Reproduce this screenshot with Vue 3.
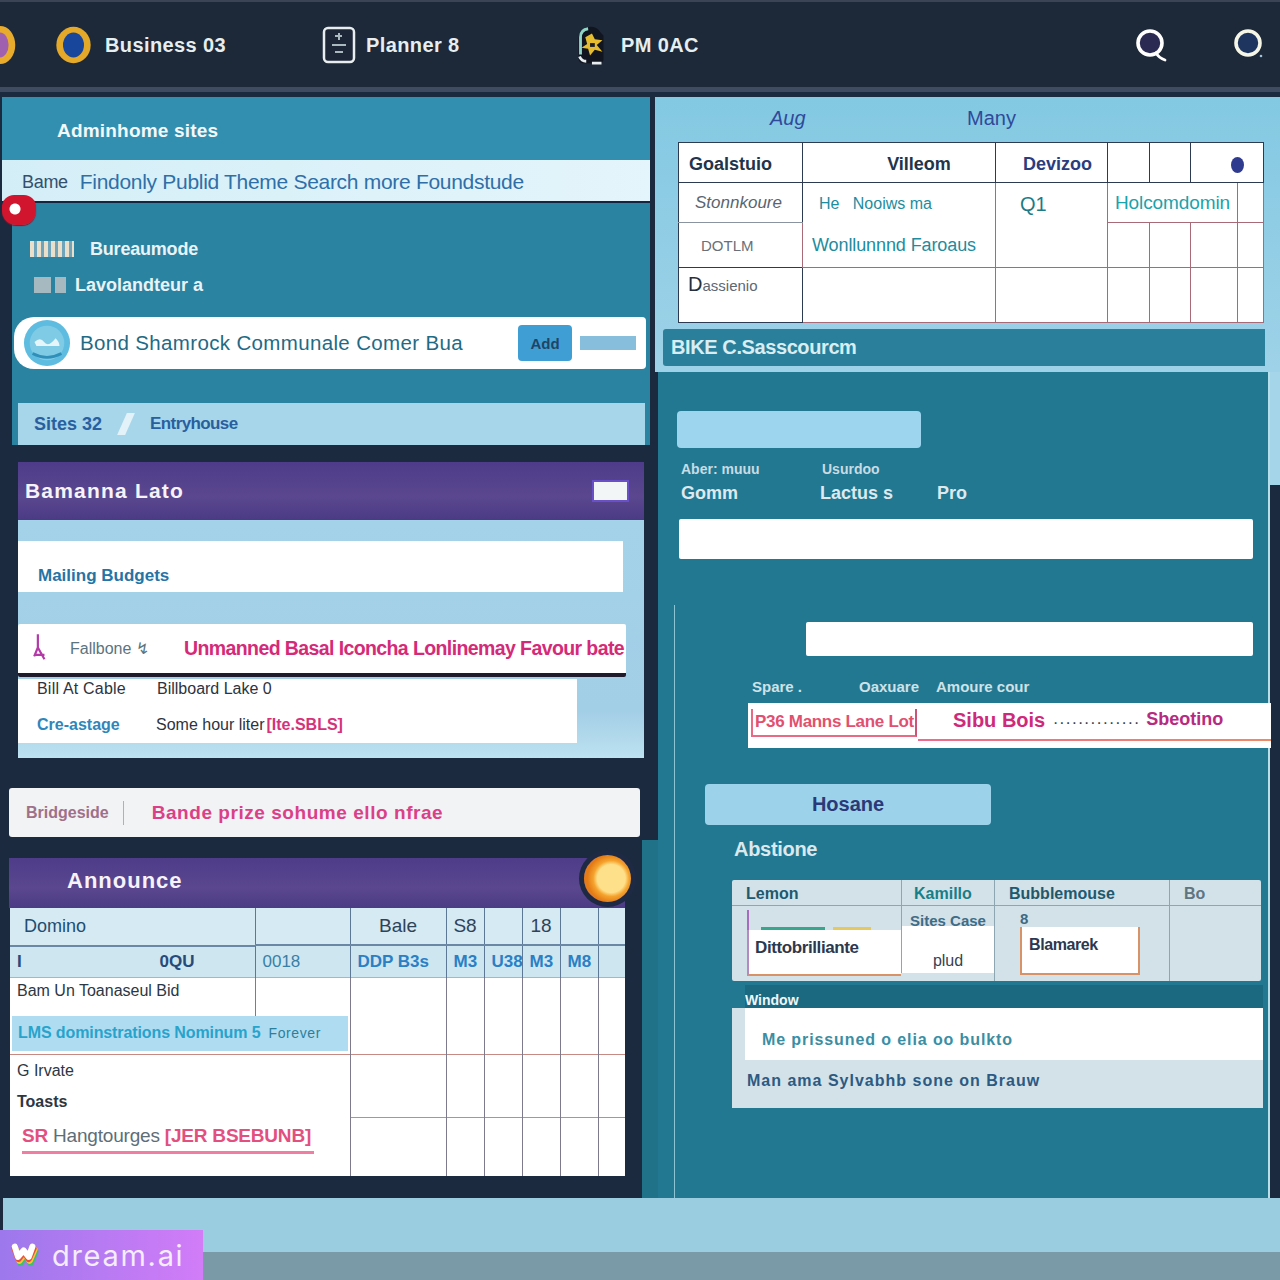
<template>
  <div class="page">
    <header class="topbar">
      <svg class="coin cut" viewBox="0 0 36 44"><ellipse cx="18" cy="22" rx="16" ry="20" fill="#e9ab2c"/><ellipse cx="18" cy="22" rx="9" ry="13" fill="#a060b0"/></svg>
      <div class="nav first">
        <svg class="coin" viewBox="0 0 38 44"><ellipse cx="19" cy="22" rx="18" ry="19" fill="#e5a92a"/><ellipse cx="19" cy="22" rx="11" ry="13" fill="#17469a"/></svg>
        <span>Business 03</span>
      </div>
      <div class="nav second">
        <svg class="tablet" viewBox="0 0 34 38"><rect x="2" y="2" width="30" height="34" rx="4" fill="#1d2636" stroke="#e8eef0" stroke-width="2.5"/><path d="M13 10h7M17 7v7M10 19h14M13 26h8" stroke="#aab8c0" stroke-width="2" fill="none"/></svg>
        <span>Planner 8</span>
      </div>
      <div class="nav third">
        <svg class="badge" viewBox="0 0 34 44">
          <path d="M6 10q2-7 10-7t11 6l3 3v26q-1 3-4 3H8q-3 0-4-4V14z" fill="#10151f"/>
          <path d="M6 32V14q0-8 8-9" stroke="#8fd4c4" stroke-width="3" fill="none"/>
          <path d="M5 34q2 5 7 5M18 41h10" stroke="#e8eef0" stroke-width="3" fill="none"/>
          <path d="M18 10l3 6 8 1-6 5 6 7-8-2-5 6-2-7-7-1 6-4-2-7z" fill="#e5bd2e"/>
          <path d="M16 20h5v4h-5z" fill="#1a1f2a"/>
        </svg>
        <span>PM 0AC</span>
      </div>
      <div class="tools">
        <svg class="search" viewBox="0 0 32 36"><circle cx="15" cy="16" r="12" fill="#2a2a52" stroke="#fff" stroke-width="3.6"/><path d="M21 26q3 5 9 7" stroke="#fff" stroke-width="2.8" fill="none" stroke-linecap="round"/></svg>
        <svg class="search" viewBox="0 0 32 36"><circle cx="15" cy="16" r="12" fill="#1e3560" stroke="#f6f6e6" stroke-width="3.6"/><circle cx="28" cy="29" r="1.3" fill="#9fc0d8"/></svg>
      </div>
    </header>
    <div class="rule"></div>

    <main class="columns">
      <section class="left">
        <div class="teal-head">
          <h2>Adminhome sites</h2>
          <div class="notice">
            <span class="ink">Bame</span><span>Findonly Publid Theme Search more Foundstude</span>
          </div>
        </div>
        <div class="teal-body">
          <span class="pin"></span>
          <p class="line-a"><i></i>Bureaumode</p>
          <p class="line-b"><i></i><i></i>Lavolandteur a</p>
          <div class="pill">
            <svg class="globe" viewBox="0 0 50 50"><circle cx="25" cy="25" r="24" fill="#5ebce0"/><circle cx="25" cy="25" r="18" fill="#7fcbe6"/><path d="M12 24q6-6 10 0t12-4q4 4 4 8H14z" fill="#e6f5fa"/><path d="M10 36q15 8 30 0" stroke="#2f8fb8" stroke-width="3" fill="none"/></svg>
            <span class="pill-text">Bond Shamrock Communale Comer Bua</span>
            <button class="pill-btn">Add</button>
            <span class="pill-bar"></span>
          </div>
          <div class="crumbs"><span>Sites 32</span><b></b><span class="second-crumb">Entryhouse</span></div>
        </div>

        <div class="card-form">
          <div class="violet-head form-head">
            <span>Bamanna Lato</span>
            <span class="mini"></span>
          </div>
          <div class="form-body">
            <div class="field">Mailing Budgets</div>
            <div class="alert">
              <svg viewBox="0 0 30 44"><path d="M8 2v18M8 20l-5 12M8 20l9 16M3 30h14" stroke="#b43aa8" stroke-width="3" fill="none"/></svg>
              <span class="muted">Fallbone &#8623;</span>
              <span class="pink">Unmanned Basal Iconcha Lonlinemay Favour bate</span>
            </div>
            <div class="details">
              <p><b>Bill At Cable</b><span>Billboard Lake 0</span></p>
              <p class="tall"><em>Cre-astage</em><span>Some hour liter</span><u>[Ite.SBLS]</u></p>
            </div>
          </div>
        </div>

        <div class="flash"><span>Bridgeside</span><i></i><em>Bande prize sohume ello nfrae</em></div>

        <div class="violet-head table-head">
          <span>Announce</span>
          <span class="sun"></span>
        </div>
        <table class="grid-left">
          <colgroup><col class="c1" /><col class="c2" /><col class="c3" /><col class="c4" /><col class="c4" /><col class="c4" /><col class="c4" /><col /></colgroup>
          <tr class="h1">
            <th>Domino</th><th></th><th class="mid">Bale</th><th class="mid">S8</th><th></th><th class="mid">18</th><th></th><th></th>
          </tr>
          <tr class="h2">
            <th class="split"><b>I</b><b>0QU</b></th><th>0018</th><th class="blue">DDP B3s</th><th class="blue">M3</th><th class="blue">U38</th><th class="blue">M3</th><th class="blue">M8</th><th></th>
          </tr>
          <tr class="r1">
            <td>Bam Un Toanaseul Bid</td><td></td><td rowspan="2"></td><td rowspan="2"></td><td rowspan="2"></td><td rowspan="2"></td><td rowspan="2"></td><td rowspan="2"></td>
          </tr>
          <tr class="r2">
            <td colspan="2" class="flat"><div class="glow"><span>LMS dominstrations Nominum 5</span><small>Forever</small></div></td>
          </tr>
          <tr class="r3">
            <td colspan="2"><p>G Irvate</p><p>Toasts</p></td><td></td><td></td><td></td><td></td><td></td><td></td>
          </tr>
          <tr class="r4">
            <td colspan="2" class="flat"><div class="rose"><span>SR</span> <span class="grey">Hangtourges</span> <span>[JER BSEBUNB]</span></div></td><td></td><td></td><td></td><td></td><td></td><td></td>
          </tr>
        </table>
      </section>

      <section class="right">
        <div class="sky">
          <div class="sky-labels"><span>Aug</span><span>Many</span></div>
          <table class="grid-top">
            <colgroup><col class="t1" /><col class="t2" /><col class="t3" /><col class="t4" /><col class="t4" /><col class="t6" /><col /></colgroup>
            <tr class="th">
              <th>Goalstuio</th><th class="mid offset">Villeom</th><th class="mid navy">Devizoo</th><th></th><th></th><th colspan="2" class="dot-cell"><i></i></th>
            </tr>
            <tr class="a">
              <td class="lined">Stonnkoure</td>
              <td rowspan="2" class="stack"><p>He &nbsp; Nooiws ma</p><p>Wonllunnnd Faroaus</p></td>
              <td rowspan="2" class="q">Q1</td>
              <td colspan="3" class="teal-text">Holcomdomin</td>
              <td></td>
            </tr>
            <tr class="b">
              <td class="center-grey">DOTLM</td><td></td><td></td><td></td><td></td>
            </tr>
            <tr class="c">
              <td class="top-grey">Dassienio</td><td></td><td></td><td></td><td></td><td></td><td></td>
            </tr>
          </table>
          <div class="sky-bar"><span>BIKE C.Sasscourcm</span></div>
        </div>

        <div class="deep">
          <div class="block"></div>
          <div class="labels small"><span>Aber: muuu</span><span>Usurdoo</span></div>
          <div class="labels"><span>Gomm</span><span>Lactus s</span><span>Pro</span></div>
          <div class="white w1"></div>
          <div class="inner">
            <div class="white w2"></div>
            <div class="labels3"><span>Spare .</span><span>Oaxuare</span><span>Amoure cour</span></div>
            <div class="redrow">
              <span class="boxed">P36 Manns Lane Lot</span>
              <span class="swash">Sibu Bois</span>
              <span class="dots">..............</span>
              <span class="swash end">Sbeotino</span>
            </div>
            <button class="hosane">Hosane</button>
            <div class="sub">Abstione</div>
            <div class="panel">
              <div class="cell hd">Lemon</div><div class="cell hd teal">Kamillo</div><div class="cell hd">Bubblemouse</div><div class="cell hd grey">Bo</div>
              <div class="cell c-a"><div class="stripes"></div><div class="box orange">Dittobrilliante</div></div>
              <div class="cell c-b"><p>Sites Case</p><p class="end">plud</p></div>
              <div class="cell c-c"><small>8</small><div class="box orange narrow">Blamarek</div></div>
              <div class="cell"></div>
            </div>
            <div class="lower">
              <div class="lower-head">Window</div>
              <div class="lower-white">Me prissuned o elia oo bulkto</div>
              <div class="lower-grey">Man ama Sylvabhb sone on Brauw</div>
            </div>
          </div>
        </div>
      </section>
    </main>

    <footer class="foot">
      <div class="foot-a"></div>
      <div class="foot-b"></div>
    </footer>

    <div class="mark">
      <svg viewBox="0 0 30 28">
        <path d="M6 10l4 12 6-8 5 8 5-12" fill="none" stroke="#3ac070" stroke-width="7" stroke-linejoin="round" stroke-linecap="round"/>
        <path d="M5 8l4 12 6-8 5 8 5-12" fill="none" stroke="#f5c83a" stroke-width="7" stroke-linejoin="round" stroke-linecap="round"/>
        <path d="M4 7l4 11 6-8 5 8 5-11" fill="none" stroke="#e8503a" stroke-width="7" stroke-linejoin="round" stroke-linecap="round"/>
        <path d="M4 5l3.500 11 6-7 5.500 7 4-11" fill="none" stroke="#fff" stroke-width="6.500" stroke-linejoin="round" stroke-linecap="round"/>
      </svg>
      <span>dream.ai</span>
    </div>
  </div>
</template>

<script setup>
</script>

<style>
html, body { margin: 0; background: #1c2a3f; }
</style>

<style scoped>
.page { position: relative; width: 1280px; height: 1280px; overflow: hidden; background: #1c2a3f; font-family: "Liberation Sans", Arial, sans-serif; display: flex; flex-direction: column; }
p { margin: 0; }
h2 { margin: 0; }

.topbar { height: 88px; flex: none; box-sizing: border-box; border-top: 2px solid #3a4454; display: flex; align-items: center; background: #1d2838; color: #e6eef0; font-size: 20px; font-weight: 700; }
.coin { width: 37px; height: 42px; flex: none; }
.cut { margin-left: -18px; width: 36px; }
.nav { display: flex; align-items: center; }
.nav span { letter-spacing: .4px; }
.first { margin-left: 37px; width: 267px; gap: 13px; }
.second { width: 252px; gap: 10px; }
.third { gap: 13px; }
.tablet { width: 34px; height: 38px; }
.badge { width: 34px; height: 42px; }
.tools { margin-left: auto; display: flex; gap: 66px; margin-right: 15px; }
.search { width: 32px; height: 36px; }
.rule { height: 5px; flex: none; margin-top: -1px; background: #3f4b60; }

.columns { height: 1101px; flex: none; display: flex; margin-top: 5px; }
.left { width: 655px; flex: none; }
.right { flex: 1; min-width: 0; }

.teal-head { margin-left: 2px; width: 648px; background: #338fb0; }
.teal-head h2 { height: 63px; box-sizing: border-box; padding: 24px 0 0 55px; font-size: 19px; line-height: 20px; color: #f3f8fa; letter-spacing: .2px; font-weight: 700; }
.notice { height: 43px; box-sizing: border-box; display: flex; align-items: center; gap: 12px; padding: 3px 0 0 20px; background: linear-gradient(90deg, #d4eef7, #e4f5fb); color: #2f6fa8; font-size: 21px; letter-spacing: -.3px; border-bottom: 2px solid #14263f; }
.notice .ink { color: #33506e; font-size: 18px; }
.teal-body { position: relative; margin-left: 12px; width: 638px; height: 242px; background: #2b83a2; box-sizing: border-box; padding-top: 34px; }
.pin { position: absolute; left: -10px; top: -8px; width: 34px; height: 30px; border-radius: 12px 12px 14px 14px; background: radial-gradient(circle at 13px 14px, #fff 5px, #d2152e 6px); box-shadow: 0 1px 1px #7b1a2a; }
.line-a, .line-b { display: flex; align-items: center; height: 24px; color: #e9f3f6; font-size: 18px; font-weight: 700; letter-spacing: -.2px; padding-left: 18px; }
.line-a i { width: 44px; height: 16px; background: repeating-linear-gradient(90deg, #eadfcb 0 4px, #6fa4ba 4px 7px); margin-right: 16px; }
.line-b { margin-top: 12px; padding-left: 22px; font-size: 18px; letter-spacing: 0; }
.line-b i { width: 17px; height: 16px; margin-right: 4px; background: #a6b9c0; }
.line-b i:last-of-type { width: 11px; margin-right: 9px; }
.pill { margin: 20px 4px 0 2px; height: 52px; display: flex; align-items: center; background: #fff; border-radius: 20px 4px 4px 20px; padding-left: 9px; }
.globe { width: 48px; height: 48px; flex: none; }
.pill-text { margin-left: 9px; width: 438px; white-space: nowrap; color: #1f6a85; font-size: 20.5px; letter-spacing: .35px; }
.pill-btn { width: 54px; height: 36px; border: 0; padding: 0; border-radius: 4px; background: #3f9fd4; color: #1f4465; font: 700 15px "Liberation Sans", Arial, sans-serif; }
.pill-bar { margin-left: 8px; width: 56px; height: 14px; background: #86bedc; }
.crumbs { margin: 34px 5px 0 6px; height: 42px; display: flex; align-items: center; background: #a7d6eb; color: #2a5f9e; padding-left: 16px; font-size: 18px; font-weight: 700; }
.crumbs b { width: 8px; height: 22px; background: #e3f2f8; transform: skewX(-24deg); margin: 0 20px 0 20px; }
.second-crumb { letter-spacing: -.6px; font-size: 17px; }

.violet-head { display: flex; align-items: center; justify-content: space-between; box-sizing: border-box; background: linear-gradient(180deg, #4e3c8a, #5a478f 60%, #4b3a85); color: #f6f3fb; font-weight: 700; }
.card-form { margin: 17px 6px 0 18px; }
.form-head { height: 58px; width: 626px; padding: 0 15px 0 7px; font-size: 21px; letter-spacing: 1.2px; }
.mini { width: 37px; height: 22px; background: #f3f6f6; border: 2px solid #6a50c8; box-sizing: border-box; }
.form-body { height: 238px; width: 626px; box-sizing: border-box; padding-top: 21px; background: linear-gradient(180deg, #a4d3e9, #a2cee6 80%, #bde2f0); }
.field { width: 605px; height: 51px; box-sizing: border-box; padding: 25px 0 0 20px; background: #fff; color: #2674a6; font-size: 17px; line-height: 20px; font-weight: 700; }
.alert { margin-top: 32px; width: 608px; height: 53px; box-sizing: border-box; display: flex; align-items: center; background: #fff; border-radius: 2px; border-bottom: 4px solid #1f1a2c; padding-left: 14px; white-space: nowrap; overflow: hidden; }
.alert svg { width: 22px; height: 40px; flex: none; }
.muted { margin-left: 16px; color: #5a7480; font-size: 16px; width: 114px; flex: none; }
.pink { color: #d52a78; font-size: 19.5px; font-weight: 700; letter-spacing: -.6px; }
.details { margin-top: 2px; width: 559px; height: 64px; background: #fff; box-sizing: border-box; padding: 0 0 0 19px; }
.details p { display: flex; align-items: center; white-space: nowrap; height: 19px; font-size: 16px; color: #2e3340; }
.details p b { font-weight: 400; width: 120px; letter-spacing: .2px; }
.details .tall { margin-top: 16px; height: 22px; }
.details em { font-style: normal; font-weight: 700; color: #2e86bb; width: 119px; font-size: 16px; }
.details u { color: #d5327b; text-decoration: none; font-weight: 700; margin-left: 2px; }
.flash { margin: 30px 15px 0 9px; height: 49px; display: flex; align-items: center; background: #f1f3f5; border-radius: 3px; padding-left: 17px; font-size: 19px; font-weight: 700; white-space: nowrap; }
.flash span { color: #a07088; font-size: 16px; }
.flash i { width: 1px; height: 24px; background: #a8b2c4; margin: 0 28px 0 14px; }
.flash em { font-style: normal; color: #dc3f88; letter-spacing: .55px; }
.table-head { position: relative; margin: 21px 0 0 9px; width: 616px; height: 50px; padding: 0 0 5px 58px; font-size: 22px; letter-spacing: 1px; }
.sun { position: absolute; right: -6px; top: -3px; width: 47px; height: 47px; border-radius: 50%; background: radial-gradient(circle at 58% 50%, #ffe08a 0 14px, #f5a32d 18px, #e47b16 24px); box-shadow: 0 0 0 5px #1e2a44; }

.grid-left { margin-left: 10px; width: 615px; height: 267px; table-layout: fixed; border-collapse: collapse; background: #fff; font-size: 16px; color: #2c3744; }
.c1 { width: 245px; }
.c2 { width: 95px; }
.c3 { width: 96px; }
.c4 { width: 38px; }
.grid-left th, .grid-left td { padding: 0; border-left: 1px solid #7c7a8c; border-top: 1px solid #c68a84; vertical-align: middle; font-weight: 400; text-align: left; white-space: nowrap; overflow: hidden; }
.grid-left tr > :first-child { border-left: 0; }
.h1 { height: 37px; background: #d6eaf3; }
.h1 th { border-top: 0; border-left-color: #5d7896; }
.h1 th:first-child { padding-left: 14px; color: #214d70; font-size: 18px; }
.mid { text-align: center !important; }
.h1 .mid { color: #2f4358; font-size: 19px; }
.h2 { height: 32px; background: #cde6f0; }
.h2 th { border-top: 2px solid #6a87a6; border-left-color: #5d7896; color: #3a7fa6; padding-left: 7px !important; font-size: 17px; }
.split { display: flex; justify-content: space-between; height: 32px; align-items: center; padding: 0 60px 0 7px !important; box-sizing: border-box; color: #284a78 !important; }
.blue { color: #2b7fc5 !important; font-weight: 700 !important; padding-left: 2px !important; }
.r1 { height: 38px; }
.r1 td { vertical-align: top; padding: 4px 0 0 7px; border-top-color: #e8a088; }
.r1 td:nth-child(n+3), .r2 td:nth-child(n+3) { padding: 0; }
.r2 { height: 39px; }
.flat { padding: 0 !important; border-top: 0 !important; vertical-align: top !important; }
.glow { height: 35px; margin: 0 2px; display: flex; align-items: center; background: #afdcf1; color: #28a3cc; font-size: 16px; font-weight: 700; letter-spacing: -.1px; padding-left: 6px; }
.glow small { margin-left: 8px; font-size: 14px; color: #2c7f9c; font-weight: 400; letter-spacing: .6px; }
.r3 { height: 63px; }
.r3 p { line-height: 23px; padding-left: 7px; font-size: 16px; }
.r3 p + p { margin-top: 8px; font-weight: 700; }
.r4 { height: 58px; }
.rose { margin: 7px 36px 0 12px; padding-bottom: 4px; border-bottom: 3px solid #ef7ea0; font-size: 19px; font-weight: 700; color: #e3507f; letter-spacing: -.2px; }
.rose .grey { color: #5d6e78; font-weight: 400; }

.sky { margin-left: 0; height: 275px; background: linear-gradient(180deg, #83c9e2, #9ed2e8); box-sizing: border-box; padding-top: 10px; }
.sky-labels { height: 35px; display: flex; color: #2f4a9a; font-size: 20px; font-style: italic; }
.sky-labels span:first-child { margin-left: 115px; width: 197px; }
.sky-labels span:last-child { font-style: normal; }
.grid-top { margin-left: 23px; width: 586px; height: 180px; table-layout: fixed; border-collapse: collapse; background: #fff; font-size: 18px; color: #22344a; }
.t1 { width: 124px; }
.t2 { width: 193px; }
.t3 { width: 112px; }
.t4 { width: 41.5px; }
.t6 { width: 47px; }
.grid-top th, .grid-top td { padding: 0; border: 1px solid #2c3a52; border-top-width: 1.5px; text-align: left; font-weight: 400; white-space: nowrap; overflow: hidden; }
.grid-top td { border-color: #a96a78; }
.grid-top td:first-child { border-color: #2c3a52; }
.th { height: 40px; }
.th th { padding-top: 3px; }
.th th:first-child { padding-left: 10px; font-weight: 700; }
.th .mid { font-weight: 700; }
.offset { padding-left: 40px !important; }
.navy { color: #2a3d7e; padding-left: 12px !important; }
.dot-cell { text-align: right !important; padding-right: 19px !important; }
.dot-cell i { display: inline-block; width: 13px; height: 16px; border-radius: 50%; background: #2f3b8f; vertical-align: middle; }
.a { height: 40px; }
.b { height: 45px; }
.c { height: 55px; }
.lined { padding-left: 16px !important; color: #5a6570; font-style: italic; font-size: 17px; border-bottom-color: #8a94a0 !important; }
.stack { padding: 0 !important; vertical-align: top; color: #1e8c9e; font-weight: 700; }
.stack p:first-child { margin: 12px 0 0 16px; font-size: 16px; }
.stack p:last-child { margin: 22px 0 0 9px; font-size: 18px; letter-spacing: -.1px; }
.q { vertical-align: top; padding: 10px 0 0 24px !important; color: #1c7b86; font-size: 20px; font-weight: 700; }
.teal-text { color: #19a3ac; font-size: 19px; font-weight: 700; text-align: center !important; letter-spacing: -.1px; }
.center-grey { padding-left: 22px !important; color: #6a6f78; font-size: 15px; }
.top-grey { vertical-align: top; padding: 5px 0 0 9px !important; color: #5c6872; font-size: 15px; }
.top-grey::first-letter { font-size: 20px; color: #252f3e; }
.sky-bar { margin: 6px 15px 0 8px; height: 37px; display: flex; align-items: center; background: #2a7f9a; padding-left: 8px; border-radius: 3px 0 0 3px; }
.sky-bar span { color: #d8eef2; font-size: 20px; font-weight: 700; letter-spacing: -.4px; }

.deep { position: relative; margin: 0 10px 0 3px; height: 826px; box-sizing: border-box; padding: 39px 0 0 19px; background: #227891; border-right: 2px solid #b6dfea; }
.deep::before { content: ""; position: absolute; left: -16px; top: 468px; bottom: 0; width: 16px; background: #1f7288; }
.deep::after { content: ""; position: absolute; right: -12px; top: 0; width: 10px; height: 113px; background: #a4d5e8; }
.block { width: 244px; height: 37px; border-radius: 4px; background: #9ed5ee; }
.labels { display: flex; color: #dde9ee; font-weight: 700; font-size: 18px; height: 24px; align-items: center; }
.labels span:nth-child(1) { width: 143px; padding-left: 4px; box-sizing: border-box; }
.labels span:nth-child(2) { width: 117px; }
.labels.small { margin: 11px 0 2px; font-size: 14px; height: 20px; color: #c8dce4; }
.labels.small span:nth-child(1) { width: 145px; }
.white { background: #fff; border-radius: 2px; }
.w1 { margin: 14px 0 0 2px; width: 574px; height: 40px; }
.inner { margin: 46px 0 0 -3px; height: 593px; box-sizing: border-box; padding-top: 17px; border-left: 1px solid #8cc4d6; }
.w2 { margin: 0 0 0 131px; width: 447px; height: 34px; }
.labels3 { display: flex; margin-left: 77px; height: 26px; margin-top: 17px; align-items: center; color: #cfe2e8; font-size: 15px; font-weight: 700; white-space: nowrap; }
.labels3 span:nth-child(1) { width: 107px; }
.labels3 span:nth-child(2) { width: 77px; }
.redrow { margin: 4px 0 0 73px; width: 523px; height: 45px; box-sizing: border-box; padding-top: 6px; display: flex; align-items: flex-start; background: #fff; white-space: nowrap; color: #c92a66; font-size: 17px; font-weight: 700; position: relative; }
.redrow::after { content: ""; position: absolute; left: 170px; right: 0; top: 36px; height: 2px; background: linear-gradient(90deg, #ef6a8c, #ee8a66); }
.boxed { width: 166px; height: 28px; flex: none; box-sizing: border-box; margin-left: 3px; padding-left: 2px; border: 2px solid #e86a84; border-right-color: #cc5577; border-top: 0; letter-spacing: -.3px; line-height: 26px; color: #e25070; overflow: hidden; }
.swash { margin-left: 36px; font-size: 20px; color: #cf2a7a; }
.dots { margin-left: 8px; color: #3a4450; font-weight: 400; letter-spacing: 1.5px; }
.swash.end { margin-left: 6px; font-size: 18px; color: #b72a80; }
.hosane { display: block; margin: 36px 0 0 30px; width: 286px; height: 41px; border: 0; border-radius: 4px; background: #9dd3ea; color: #2a3a78; font: 700 20px "Liberation Sans", Arial, sans-serif; }
.sub { margin: 14px 0 0 59px; height: 20px; line-height: 20px; color: #dbe9ee; font-size: 20px; font-weight: 700; letter-spacing: -.3px; }
.panel { margin: 21px 0 0 57px; width: 529px; height: 101px; display: grid; grid-template-columns: 169px 93px 175px 92px; grid-template-rows: 26px 75px; background: #d3e2e8; border-radius: 2px; }
.cell { border-left: 1px solid #8ea6b2; position: relative; box-sizing: border-box; }
.cell:nth-child(4n+1) { border-left: 0; }
.hd { border-bottom: 1px solid #8ea6b2; padding-left: 14px; line-height: 28px; font-size: 16px; color: #20596e; font-weight: 700; white-space: nowrap; }
.hd.teal { color: #167f8a; padding-left: 12px; }
.hd.grey { color: #5f7580; }
.c-a { padding: 4px 0 0 15px; }
.stripes { height: 20px; border-left: 2px solid #a56cc0; background: linear-gradient(90deg, #d3e2e8 8%, #36a68c 8% 50%, #d3e2e8 50% 55%, #e6c860 55% 80%, #d3e2e8 80%) 0 100% / 100% 3px no-repeat; }
.box { background: #fff; box-sizing: border-box; color: #2b3850; font-weight: 700; }
.orange { border: 2px solid #d99268; border-top: 0; }
.c-a .box { height: 46px; padding: 8px 0 0 6px; font-size: 17px; letter-spacing: -.4px; white-space: nowrap; overflow: hidden; border-right: 0; border-left-color: #b48ac0; }
.c-b { background: linear-gradient(180deg, #d3e2e8 20px, #fff 20px); margin-bottom: 8px; padding-top: 6px; color: #3f6c86; font-size: 15px; font-weight: 700; white-space: nowrap; text-align: center; }
.c-b .end { margin-top: 23px; font-size: 16px; color: #3a3f50; font-weight: 400; }
.c-c { padding: 4px 0 0 25px; }
.c-c small { display: block; height: 17px; line-height: 17px; color: #406a80; font-size: 15px; font-weight: 700; }
.narrow { width: 120px; height: 48px; padding: 9px 0 0 7px; font-size: 16px; letter-spacing: -.4px; }
.lower { margin: 4px 0 0 57px; width: 531px; }
.lower-head { margin-left: 13px; height: 23px; background: #1a6980; color: #eef6f8; font-size: 14px; font-weight: 700; line-height: 30px; overflow: hidden; }
.lower-white { height: 52px; box-sizing: border-box; padding: 23px 0 0 17px; background: #fff; border-left: 13px solid #d3e2e8; color: #3a8ea3; font-size: 16px; letter-spacing: .9px; font-weight: 700; }
.lower-grey { height: 48px; box-sizing: border-box; padding: 12px 0 0 2px; background: #d3e2e8; border-left: 13px solid #d3e2e8; color: #2c5a82; font-size: 16px; font-weight: 700; letter-spacing: 1px; }

.foot { flex: none; }
.foot-a { height: 54px; margin-left: 3px; background: #9bcde0; }
.foot-b { height: 28px; background: #7b9aa8; }

.mark { position: absolute; left: 0; top: 1230px; width: 203px; height: 50px; box-sizing: border-box; padding-left: 11px; display: flex; align-items: center; gap: 13px; background: linear-gradient(90deg, #9c78ec, #d27cf8); color: #f4ecff; font-family: Inter, "Liberation Sans", sans-serif; font-size: 29px; font-weight: 400; letter-spacing: 1.7px; }
.mark svg { width: 28px; height: 26px; flex: none; }
</style>
